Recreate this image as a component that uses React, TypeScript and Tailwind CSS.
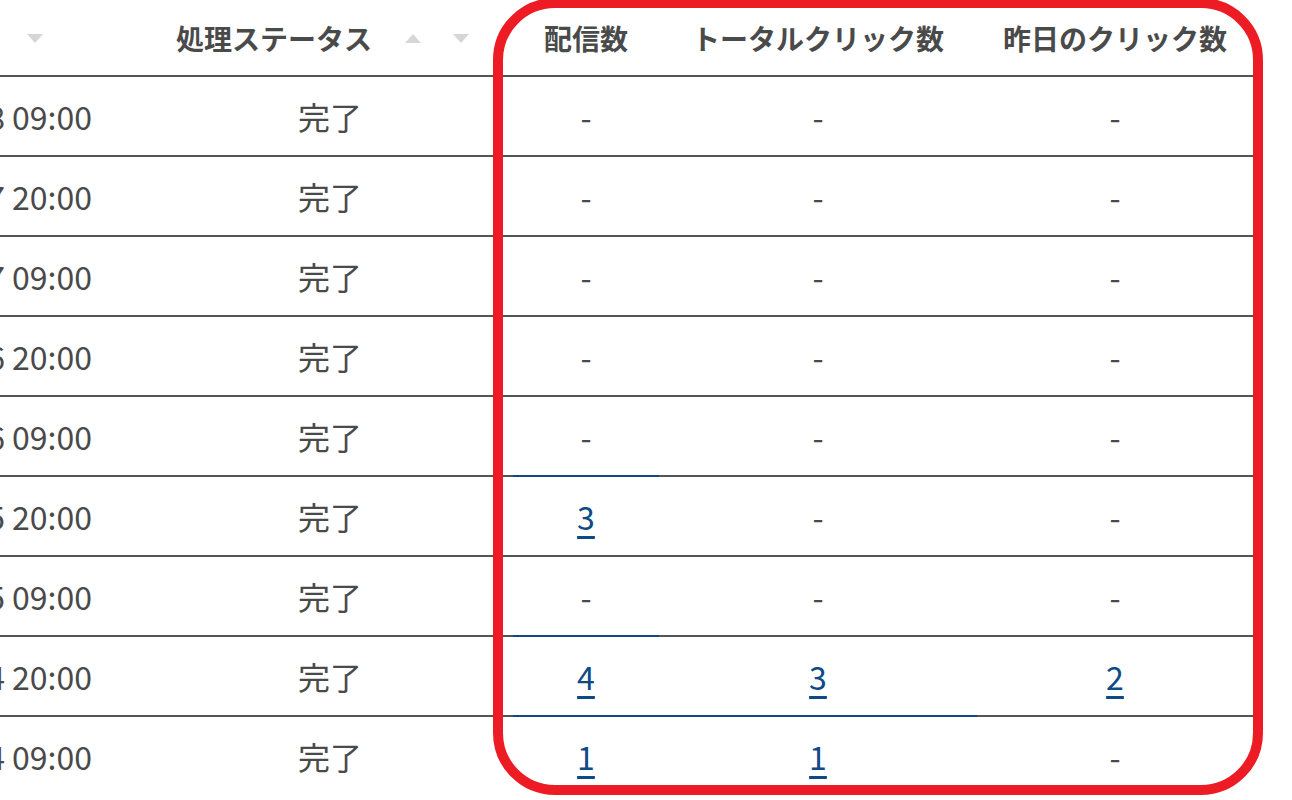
const rows = [
  { date: "2024/06/18 09:00", sent: null, total: null, yesterday: null, blue: [] as number[] },
  { date: "2024/06/17 20:00", sent: null, total: null, yesterday: null, blue: [] },
  { date: "2024/06/17 09:00", sent: null, total: null, yesterday: null, blue: [] },
  { date: "2024/06/16 20:00", sent: null, total: null, yesterday: null, blue: [] },
  { date: "2024/06/16 09:00", sent: null, total: null, yesterday: null, blue: [] },
  { date: "2024/06/15 20:00", sent: 3, total: null, yesterday: null, blue: [0] },
  { date: "2024/06/15 09:00", sent: null, total: null, yesterday: null, blue: [] },
  { date: "2024/06/14 20:00", sent: 4, total: 3, yesterday: 2, blue: [0] },
  { date: "2024/06/14 09:00", sent: 1, total: 1, yesterday: null, blue: [0, 1] },
];

function SortIcons() {
  return (
    <div className="flex items-center gap-[32px]">
      <span className="block w-0 h-0 border-l-[8.5px] border-r-[8.5px] border-b-[9px] border-l-transparent border-r-transparent border-b-[#d6d6d6]" />
      <span className="block w-0 h-0 border-l-[8px] border-r-[8px] border-t-[9px] border-l-transparent border-r-transparent border-t-[#d6d6d6]" />
    </div>
  );
}

function Value({ v }: { v: number | null }) {
  if (v === null) return <span>-</span>;
  return (
    <a href="#" className="text-[#0d4a86] underline decoration-[3px] underline-offset-[6px]">
      {v}
    </a>
  );
}

export default function App() {
  return (
    <div
      className="relative w-[1292px] h-[800px] overflow-hidden bg-white text-[#4a4a4a]"
      style={{ fontFamily: '"Noto Sans CJK JP", "Noto Sans", sans-serif' }}
    >
      {/* header */}
      <div className="flex h-[75px] pt-[1px] text-[28px] font-bold">
        <div className="ml-[-158px] w-[300px] shrink-0 flex items-center justify-end pr-[99px] gap-[33px]">
          <span>配信日時</span>
          <SortIcons />
        </div>
        <div className="w-[371px] shrink-0 flex items-center pl-[34px] gap-[33px]">
          <span>処理ステータス</span>
          <SortIcons />
        </div>
        <div className="w-[146px] shrink-0 flex items-center justify-center">配信数</div>
        <div className="w-[318px] shrink-0 flex items-center justify-center">トータルクリック数</div>
        <div className="w-[276px] shrink-0 flex items-center justify-center">昨日のクリック数</div>
      </div>

      {/* body */}
      {rows.map((r) => (
        <div key={r.date} className="flex h-[80px] text-[32px]">
          <div className="ml-[-158px] w-[300px] shrink-0 border-t-2 border-[#555] flex items-center justify-end pr-[50px] whitespace-nowrap">
            {r.date}
          </div>
          <div className="w-[371px] shrink-0 border-t-2 border-[#555] flex items-center justify-center pl-[5px]">
            完了
          </div>
          <div
            className={`w-[146px] shrink-0 border-t-2 flex items-center justify-center ${
              r.blue.includes(0) ? "border-[#0d4a86]" : "border-[#555]"
            }`}
          >
            <Value v={r.sent} />
          </div>
          <div
            className={`w-[318px] shrink-0 border-t-2 flex items-center justify-center ${
              r.blue.includes(1) ? "border-[#0d4a86]" : "border-[#555]"
            }`}
          >
            <Value v={r.total} />
          </div>
          <div className="w-[276px] shrink-0 border-t-2 border-[#555] flex items-center justify-center">
            <Value v={r.yesterday} />
          </div>
        </div>
      ))}

      {/* highlight frame */}
      <div className="absolute left-[493px] top-[-2px] w-[770px] h-[797px] border-[10px] border-[#ed1c24] rounded-[62px] pointer-events-none" />
    </div>
  );
}
